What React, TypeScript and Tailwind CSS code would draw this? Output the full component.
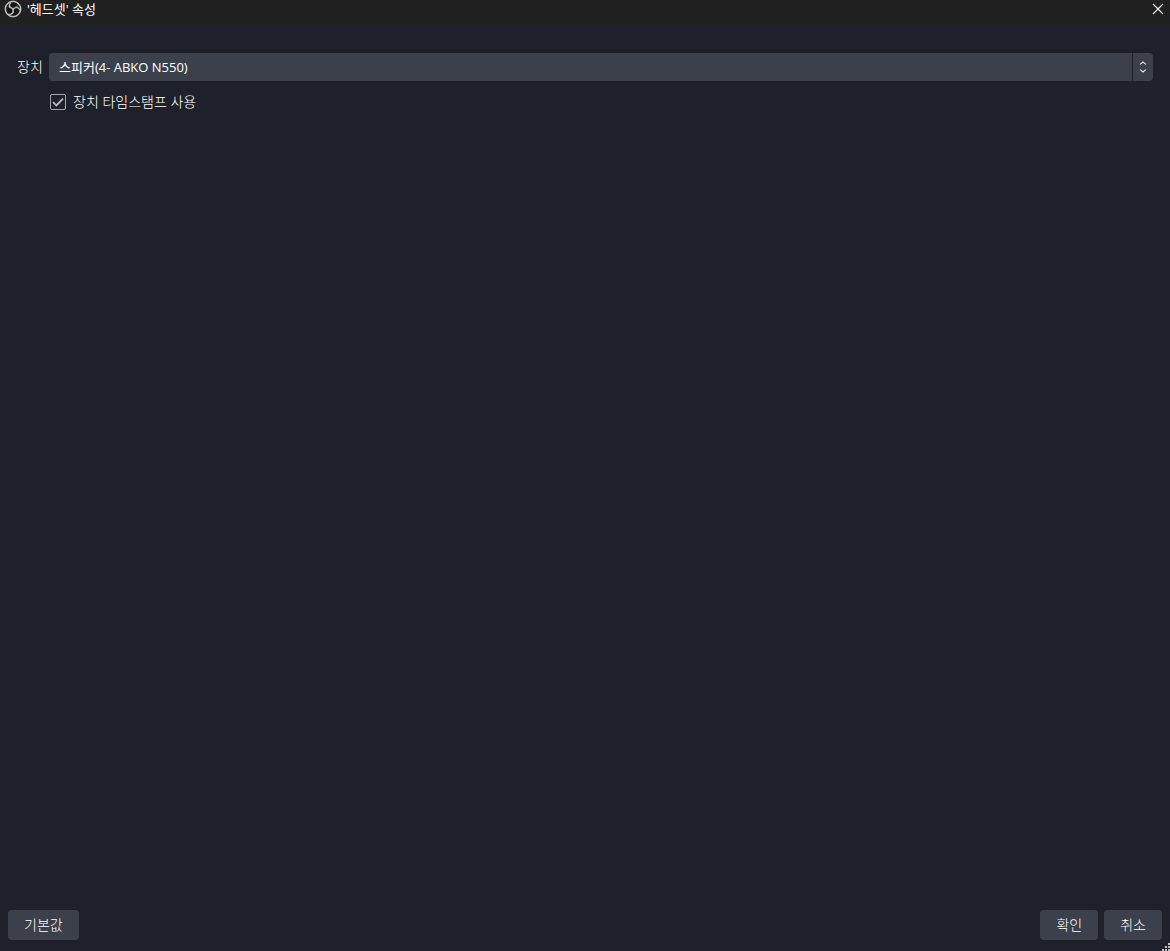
import { useState } from 'react'
import { SiObsstudio } from 'react-icons/si'

const DEVICES = ['스피커(4- ABKO N550)']

function TitleBar() {
  return (
    <header className="flex h-[25px] items-start justify-between bg-[#202020] pr-[6px] pl-1">
      <div className="flex items-center gap-[5px]">
        <span className="flex h-[18px] w-[18px] items-center justify-center rounded-full bg-[#141414]">
          <SiObsstudio
            className="h-4 w-4 overflow-visible stroke-[#c8c8c8] stroke-[1.2] text-[#c8c8c8]"
            aria-hidden="true"
          />
        </span>
        <h1 className="text-[13px] leading-[18px] font-normal whitespace-nowrap">'헤드셋' 속성</h1>
      </div>
      <button type="button" aria-label="닫기" className="flex h-[18px] w-3 items-center justify-center">
        <svg viewBox="0 0 12 12" className="h-3 w-3" fill="none" stroke="#f2f2f2" strokeWidth="1.1">
          <path d="M1 1L11 11M11 1L1 11" />
        </svg>
      </button>
    </header>
  )
}

function DeviceSelect() {
  return (
    <div className="relative flex-1">
      <select
        id="device"
        className="block h-7 w-full appearance-none rounded bg-[#3c404b] pr-10 pl-[10px] text-[13px] font-normal text-white"
      >
        {DEVICES.map((device) => (
          <option key={device}>{device}</option>
        ))}
      </select>
      <div className="pointer-events-none absolute inset-y-0 right-0 flex w-[21px] items-center justify-center border-l border-[#1e212a]">
        <svg viewBox="0 0 8 14" className="h-[14px] w-2" fill="none" stroke="#e4e4e6" strokeWidth="1.1" strokeLinecap="round">
          <path d="M1.4 4.2L4 2L6.6 4.2M1.4 9.8L4 12L6.6 9.8" />
        </svg>
      </div>
    </div>
  )
}

function TimestampCheckbox() {
  const [checked, setChecked] = useState(true)

  return (
    <label className="flex items-center gap-[7px]">
      <span className="relative block h-4 w-4">
        <input
          type="checkbox"
          checked={checked}
          onChange={(e) => setChecked(e.target.checked)}
          className="block h-4 w-4 appearance-none rounded-xs border border-[#a3a4aa]"
        />
        {checked && (
          <svg
            viewBox="0 0 16 16"
            className="pointer-events-none absolute inset-0"
            fill="none"
            stroke="#b8b9bd"
            strokeWidth="1.8"
          >
            <path d="M3 8.2L6.4 11.4L13 4.6" />
          </svg>
        )}
      </span>
      <span>장치 타임스탬프 사용</span>
    </label>
  )
}

function DialogButton({ label }: { label: string }) {
  return (
    <button type="button" className="h-[30px] rounded bg-[#3c404b] px-4">
      {label}
    </button>
  )
}

function SizeGrip() {
  return (
    <svg viewBox="0 0 8 8" className="absolute right-0 bottom-0 h-2 w-2" fill="#c0c0c0" aria-hidden="true">
      <path d="M6 0h2v2h-2zM3 3h2v2h-2zM6 3h2v2h-2zM0 6h2v2h-2zM3 6h2v2h-2zM6 6h2v2h-2z" />
    </svg>
  )
}

export default function App() {
  return (
    <div className="relative flex min-h-screen flex-col bg-[#1e212a] font-['Open_Sans','Noto_Sans_CJK_KR',sans-serif] text-sm font-light text-white">
      <TitleBar />

      <main className="flex flex-1 flex-col gap-[11px] px-[17px] pt-7">
        <div className="flex items-center">
          <label htmlFor="device" className="w-8">
            장치
          </label>
          <DeviceSelect />
        </div>
        <div className="pl-[33px]">
          <TimestampCheckbox />
        </div>
      </main>

      <footer className="flex items-center justify-between px-2 pb-[11px]">
        <DialogButton label="기본값" />
        <div className="flex gap-[6px]">
          <DialogButton label="확인" />
          <DialogButton label="취소" />
        </div>
      </footer>

      <SizeGrip />
    </div>
  )
}
